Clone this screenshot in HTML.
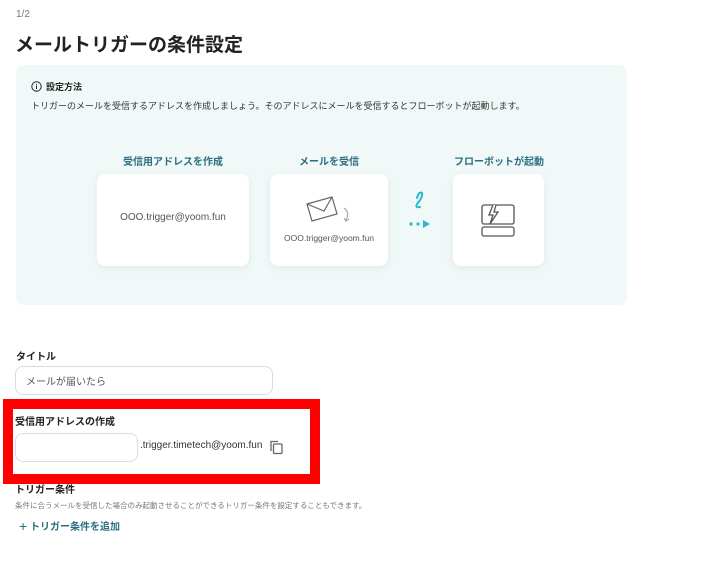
<!DOCTYPE html>
<html><head><meta charset="utf-8"><style>
*{margin:0;padding:0;box-sizing:border-box}
body{width:708px;height:565px;background:#fff;font-family:"Liberation Sans","Noto Sans CJK JP",sans-serif;color:#222;position:relative;overflow:hidden}
.a{position:absolute}
.card{position:absolute;background:#fff;border-radius:8px;box-shadow:0 2px 8px rgba(0,80,90,.08)}
.h{position:absolute;font-size:10px;font-weight:bold;color:#2a6f80;text-align:center}
.lbl{font-size:10px;font-weight:bold;color:#222}
</style></head><body>
<div class="a" style="left:16px;top:9px;font-size:10px;color:#777">1/2</div>
<div class="a" style="left:15px;top:30px;font-size:19px;font-weight:bold;color:#222">メールトリガーの条件設定</div>
<div class="a" style="left:16px;top:65px;width:611px;height:240px;background:#f1f8f8;border-radius:8px"></div>
<svg class="a" style="left:31px;top:81px" width="11" height="11"><circle cx="5.5" cy="5.5" r="4.7" fill="none" stroke="#222" stroke-width="1"/><rect x="5" y="4.5" width="1" height="3.5" fill="#222"/><rect x="5" y="2.8" width="1" height="1" fill="#222"/></svg>
<div class="a lbl" style="left:46px;top:80px;font-size:9px">設定方法</div>
<div class="a" style="left:31px;top:99px;font-size:9px;color:#333">トリガーのメールを受信するアドレスを作成しましょう。そのアドレスにメールを受信するとフローボットが起動します。</div>
<div class="h" style="left:97px;top:153px;width:152px">受信用アドレスを作成</div>
<div class="h" style="left:270px;top:153px;width:118px">メールを受信</div>
<div class="h" style="left:445px;top:153px;width:108px">フローボットが起動</div>
<div class="card" style="left:97px;top:174px;width:152px;height:92px"><div class="a" style="left:0;width:152px;top:38px;text-align:center;font-size:10px;color:#555;line-height:12px">OOO.trigger@yoom.fun</div></div>
<div class="card" style="left:270px;top:174px;width:118px;height:92px">
<svg class="a" style="left:34px;top:20px" width="50" height="30"><g fill="none" stroke="#666" stroke-width="1.2"><path d="M3 10 L28 3 L33 20 L8 27 Z M3 10 L20 17 L28 3"/><path d="M40 14 Q46 18 42 26 M40 24 L42 27 L45 25" stroke="#aaa"/></g></svg>
<div class="a" style="left:0;width:118px;top:59px;text-align:center;font-size:8.5px;color:#555">OOO.trigger@yoom.fun</div></div>
<svg class="a" style="left:404px;top:190px" width="32" height="40"><path d="M13 8 Q15 1 18 3 Q19 7 13 14 Q11 18 16 17" fill="none" stroke="#2bb8cc" stroke-width="2" stroke-linecap="round"/><circle cx="7" cy="34" r="1.6" fill="#2bb8cc"/><circle cx="14" cy="34" r="1.6" fill="#2bb8cc"/><path d="M19 30 L26 34 L19 38 Z" fill="#2bb8cc"/></svg>
<div class="card" style="left:453px;top:174px;width:91px;height:92px">
<svg class="a" style="left:27px;top:29px" width="38" height="36"><g fill="none" stroke="#555" stroke-width="1.3"><rect x="2" y="2" width="32" height="19" rx="2"/><rect x="2" y="24" width="32" height="9" rx="2"/><path d="M13 2 L9 12 L13 12 L10 21 L18 9 L14 9 L16 2" fill="#fff"/></g></svg></div>
<div class="a lbl" style="left:16px;top:348px">タイトル</div>
<div class="a" style="left:15px;top:366px;width:258px;height:29px;border:1px solid #d8dde0;border-radius:8px;font-size:10px;color:#555;padding:6px 10px">メールが届いたら</div>
<div class="a" style="left:3px;top:399px;width:317px;height:85px;border:10px solid #f00"></div>
<div class="a lbl" style="left:15px;top:413px">受信用アドレスの作成</div>
<div class="a" style="left:15px;top:433px;width:123px;height:29px;border:1px solid #d8dde0;border-radius:8px"></div>
<div class="a" style="left:140px;top:440px;font-size:10px;color:#333">.trigger.timetech@yoom.fun</div>
<svg class="a" style="left:268px;top:439px" width="16" height="16"><g fill="none" stroke="#666" stroke-width="1.3"><path d="M3 12 V2.5 H10"/><rect x="5.5" y="5" width="8.5" height="9.5" rx="1"/></g></svg>
<div class="a lbl" style="left:15px;top:481px">トリガー条件</div>
<div class="a" style="left:15px;top:500px;font-size:7.5px;color:#777">条件に合うメールを受信した場合のみ起動させることができるトリガー条件を設定することもできます。</div>
<div class="a" style="left:19px;top:518px;font-size:10px;font-weight:bold;color:#2a6f80"><span style="font-size:14px;font-weight:normal;vertical-align:-1px">+</span>&nbsp;トリガー条件を追加</div>
</body></html>
